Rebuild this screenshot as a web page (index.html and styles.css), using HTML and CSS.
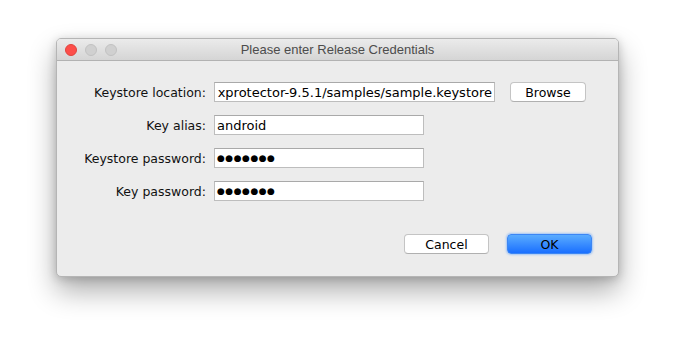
FILE: index.html
```html
<!DOCTYPE html>
<html>
<head>
<meta charset="utf-8">
<link rel="stylesheet" href="styles.css">
</head>
<body>
    <div class="dialog">
        <div class="titleBar">
            <div class="lights">
                <span class="light close"></span>
                <span class="light"></span>
                <span class="light"></span>
            </div>
            <div class="title">Please enter Release Credentials</div>
        </div>
        <div class="content">
            <div class="form">
                <label class="label">Keystore location:</label>
                <div class="row">
                    <div class="field wide"><span>xprotector-9.5.1/samples/sample.keystore</span></div>
                    <button class="button browse">Browse</button>
                </div>
                <label class="label">Key alias:</label>
                <div class="row"><div class="field"><span>android</span></div></div>
                <label class="label">Keystore password:</label>
                <div class="row"><div class="field dots"><span>&#9679;&#9679;&#9679;&#9679;&#9679;&#9679;&#9679;</span></div></div>
                <label class="label">Key password:</label>
                <div class="row"><div class="field dots"><span>&#9679;&#9679;&#9679;&#9679;&#9679;&#9679;&#9679;</span></div></div>
            </div>
            <div class="actions">
                <button class="button">Cancel</button>
                <button class="button primary">OK</button>
            </div>
        </div>
    </div>
</body>
</html>
```

FILE: styles.css
```css
html, body {
    margin: 0;
    padding: 0;
    background: #ffffff;
}
body {
    min-height: 351px;
    box-sizing: border-box;
    padding: 38px 0 0 56px;
    font-family: "DejaVu Sans", "Liberation Sans", sans-serif;
    font-size: 12.5px;
    color: #111111;
}
.dialog {
    width: 563px;
    height: 239px;
    box-sizing: border-box;
    background: #ececec;
    border: 1px solid #b5b5b5;
    border-radius: 5px;
    box-shadow: 0 14px 28px rgba(0, 0, 0, 0.32), 0 2px 10px rgba(0, 0, 0, 0.18);
    overflow: hidden;
    display: flex;
    flex-direction: column;
}
.titleBar {
    height: 21px;
    flex-shrink: 0;
    background: linear-gradient(#ebebeb, #d5d5d5);
    border-bottom: 1px solid #b2b2b2;
    display: flex;
    align-items: center;
    position: relative;
}
.lights {
    display: flex;
    gap: 8px;
    padding-left: 8px;
}
.light {
    width: 12px;
    height: 12px;
    border-radius: 50%;
    box-sizing: border-box;
    background: #d0d0d0;
    border: 1px solid #c2c2c2;
}
.light.close {
    background: #fd4e4a;
    border-color: #e0443e;
}
.title {
    position: absolute;
    left: 0;
    right: 0;
    text-align: center;
    font-family: "Liberation Sans", sans-serif;
    font-size: 13px;
    color: #4c4c4c;
}
.content {
    flex: 1;
    display: flex;
    flex-direction: column;
    padding: 21px 26px 22px 0;
}
.form {
    display: grid;
    grid-template-columns: 149px auto;
    column-gap: 8px;
    row-gap: 13px;
    align-items: center;
}
.label {
    text-align: right;
    white-space: nowrap;
}
.row {
    display: flex;
    align-items: center;
}
.field {
    width: 210px;
    height: 20px;
    box-sizing: border-box;
    background: #ffffff;
    border: 1px solid #bdbdbd;
    border-top-color: #a9a9a9;
    display: flex;
    align-items: center;
    padding: 0 2px;
    overflow: hidden;
    white-space: nowrap;
    font-size: 13px;
    color: #000000;
}
.field.wide {
    width: 281px;
    justify-content: flex-end;
}
.field span {
    flex-shrink: 0;
}
.field.dots {
    font-size: 9px;
    letter-spacing: 0.5px;
}
.button {
    width: 76px;
    height: 20px;
    box-sizing: border-box;
    font-family: "DejaVu Sans", sans-serif;
    font-size: 12.5px;
    color: #000000;
    background: #ffffff;
    border: 1px solid #c4c4c4;
    border-bottom-color: #b0b0b0;
    border-radius: 4px;
    padding: 0;
}
.browse {
    margin-left: 15px;
}
.actions {
    margin-top: auto;
    display: flex;
    justify-content: flex-end;
    gap: 18px;
}
.actions .button {
    width: 85px;
}
.primary {
    background: linear-gradient(#5aacff, #1a6fff);
    border-color: #3c86f4;
    box-shadow: 0 0 2px 1px rgba(90, 160, 255, 0.5);
}
```
